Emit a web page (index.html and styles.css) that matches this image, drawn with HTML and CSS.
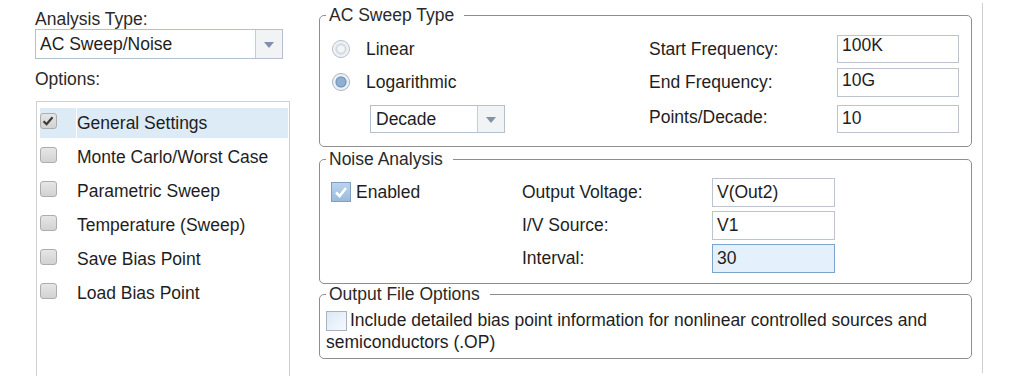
FILE: index.html
```html
<!DOCTYPE html>
<html lang="en">
<head>
    <meta charset="UTF-8">
    <meta name="viewport" content="width=device-width, initial-scale=1.0">
    <title>Simulation Settings</title>
    <link rel="stylesheet" href="styles.css">
</head>
<body>

<div class="window">
    <aside class="sidebar">
        <div class="field-label">Analysis Type:</div>
        <div class="select select-type">
            <span class="select-value">AC Sweep/Noise</span>
            <span class="select-arrow"><span class="tri"></span></span>
        </div>
        <div class="field-label options-label">Options:</div>
        <ul class="option-list">
            <li class="option selected">
                <span class="check-col"><span class="box">
                    <svg width="16" height="16" viewBox="0 0 16 16"><path d="M3.5 8.2 L6.6 11.2 L12.5 4.2" fill="none" stroke="#3a3a3a" stroke-width="2.2"/></svg>
                </span></span>
                <span class="option-text">General Settings</span>
            </li>
            <li class="option">
                <span class="check-col"><span class="box"></span></span>
                <span class="option-text">Monte Carlo/Worst Case</span>
            </li>
            <li class="option">
                <span class="check-col"><span class="box"></span></span>
                <span class="option-text">Parametric Sweep</span>
            </li>
            <li class="option">
                <span class="check-col"><span class="box"></span></span>
                <span class="option-text">Temperature (Sweep)</span>
            </li>
            <li class="option">
                <span class="check-col"><span class="box"></span></span>
                <span class="option-text">Save Bias Point</span>
            </li>
            <li class="option">
                <span class="check-col"><span class="box"></span></span>
                <span class="option-text">Load Bias Point</span>
            </li>
        </ul>
    </aside>

    <main class="settings">
        <fieldset class="group sweep">
            <legend>AC Sweep Type</legend>
            <div class="sweep-grid">
                <label class="radio-item"><span class="radio"></span>Linear</label>
                <span class="label">Start Frequency:</span>
                <div class="text-input top">100K</div>

                <label class="radio-item"><span class="radio on"></span>Logarithmic</label>
                <span class="label">End Frequency:</span>
                <div class="text-input mid">10G</div>

                <div class="select select-decade last">
                    <span class="select-value">Decade</span>
                    <span class="select-arrow"><span class="tri"></span></span>
                </div>
                <span class="label last">Points/Decade:</span>
                <div class="text-input last">10</div>
            </div>
        </fieldset>

        <fieldset class="group noise">
            <legend>Noise Analysis</legend>
            <div class="noise-grid">
                <label class="enable-item">
                    <span class="blue-box">
                        <svg width="18" height="18" viewBox="0 0 18 18"><path d="M4 9.5 L7.6 13 L14 5" fill="none" stroke="#fff" stroke-width="2.6"/></svg>
                    </span>Enabled
                </label>
                <span class="label">Output Voltage:</span>
                <div class="text-input">V(Out2)</div>

                <span class="label col-2">I/V Source:</span>
                <div class="text-input">V1</div>

                <span class="label col-2">Interval:</span>
                <div class="text-input focused">30</div>
            </div>
        </fieldset>

        <fieldset class="group output">
            <legend>Output File Options</legend>
            <p class="output-text"><span class="plain-box"></span>Include detailed bias point information for nonlinear controlled sources and semiconductors (.OP)</p>
        </fieldset>
    </main>

    <div class="rule"></div>
</div>

</body>
</html>
```

FILE: styles.css
```css
body {
    margin: 0;
    background-color: #fff;
    font-family: 'Liberation Sans', Arial, sans-serif;
    font-size: 17.5px;
    color: #1e1e1e;
}

.window {
    display: flex;
    align-items: flex-start;
    width: 1013px;
    height: 385px;
}

/* left column */

.sidebar {
    width: 254px;
    padding: 10px 0 0 35px;
}

.field-label {
    line-height: 19px;
    color: #2a2a2a;
}

.options-label {
    margin-top: 11px;
}

.select {
    display: flex;
    box-sizing: border-box;
    border: 1px solid #b6c0ca;
    background-color: #fff;
}

.select-type {
    width: 248px;
    height: 30px;
}

.select-value {
    flex: 1;
    padding-left: 4px;
    line-height: 28px;
}

.select-arrow {
    display: flex;
    align-items: center;
    justify-content: center;
    width: 26px;
    border-left: 1px solid #c6ced8;
    background-color: #f1f3f5;
}

.tri {
    width: 0;
    height: 0;
    border-left: 5px solid transparent;
    border-right: 5px solid transparent;
    border-top: 6px solid #7f92aa;
    margin-top: 1px;
}

.option-list {
    list-style: none;
    box-sizing: border-box;
    width: 254px;
    height: 275px;
    margin: 12px 0 0 1px;
    padding: 6px 1px 0 3px;
    border: 1px solid #cfcfcf;
    border-bottom: none;
}

.option {
    display: flex;
    height: 30px;
    margin-bottom: 4px;
}

.check-col {
    display: flex;
    align-items: center;
    width: 36px;
    margin-right: 1px;
}

.option-text {
    flex: 1;
    line-height: 30px;
}

.option.selected .check-col,
.option.selected .option-text {
    background-color: #ddebf7;
}

.box {
    box-sizing: border-box;
    width: 17px;
    height: 16px;
    margin-bottom: 5px;
    border: 1px solid #adadad;
    border-radius: 3px;
    background: linear-gradient(#e6e6e6, #d2d2d2);
}

.box svg {
    display: block;
    margin: -1px 0 0 -1px;
}

/* right column */

.settings {
    width: 653px;
    margin-left: 30px;
}

.group {
    margin: 0;
    padding: 0;
    border: 1px solid #8e8e8e;
    border-radius: 5px;
    min-width: 0;
}

.group legend {
    margin-left: 6px;
    padding: 0 10px 0 3px;
    line-height: 20px;
    color: #2a2a2a;
}

.sweep {
    margin-top: 5px;
}

.noise {
    margin-top: 2px;
}

.sweep-grid {
    display: grid;
    grid-template-columns: 1fr 188px 122px;
    grid-template-rows: 28px 28px 32px;
    row-gap: 5px;
    align-items: center;
    padding: 10px 12px 13px 12px;
}

.sweep-grid .last {
    align-self: end;
}

.sweep-grid .label.last {
    margin-bottom: 5px;
}

.radio-item {
    display: flex;
    align-items: center;
}

.radio {
    box-sizing: border-box;
    width: 18px;
    height: 18px;
    margin-right: 16px;
    border: 1px solid #b3bcc6;
    border-radius: 50%;
    background: radial-gradient(circle, #f2f4f6 0 3px, #cfd7df 4.5px, #e9edf1 6px, #f7f9fb 8px);
}

.radio.on {
    border-color: #a6b2c0;
    background: radial-gradient(circle, #8fb0d2 0 4px, #6f8fb2 5px, #e8edf2 6px, #f5f7f9 8px);
}

.select-decade {
    width: 135px;
    height: 28px;
    margin-left: 38px;
}

.select-decade .select-value {
    line-height: 26px;
    padding-left: 5px;
}

.text-input {
    box-sizing: border-box;
    height: 29px;
    padding: 0 4px;
    line-height: 27px;
    border: 1px solid #bcc5ce;
    background-color: #fff;
}

.text-input.top {
    height: 28px;
    line-height: 18px;
}

.text-input.mid {
    line-height: 22px;
}

.text-input.last {
    height: 28px;
    line-height: 25px;
}

.text-input.focused {
    border-color: #7ea4c9;
    background-color: #e4f0fb;
}

.noise-grid {
    display: grid;
    grid-template-columns: 191px 190px 123px 1fr;
    grid-auto-rows: 29px;
    row-gap: 4px;
    align-items: center;
    padding: 9px 0 10px 11px;
}

.col-2 {
    grid-column: 2;
}

.enable-item {
    display: flex;
    align-items: center;
    margin-top: -1px;
    line-height: 20px;
}

.blue-box {
    box-sizing: border-box;
    width: 20px;
    height: 20px;
    margin-right: 5px;
    border: 1px solid #819fc0;
    background: linear-gradient(#bcd4ec, #98bbdf);
}

.blue-box svg {
    display: block;
}

.output-text {
    margin: 0;
    padding: 5px 10px 5px 6px;
    line-height: 22px;
}

.plain-box {
    display: inline-block;
    box-sizing: border-box;
    width: 21px;
    height: 20px;
    margin-right: 3px;
    vertical-align: -5px;
    border: 1px solid #a9b3c0;
    background: linear-gradient(135deg, #dbe9f6, #f6f9fc);
}

.rule {
    width: 0;
    height: 370px;
    margin: 3px 0 0 10px;
    border-left: 1px solid #cfcfcf;
}
```
